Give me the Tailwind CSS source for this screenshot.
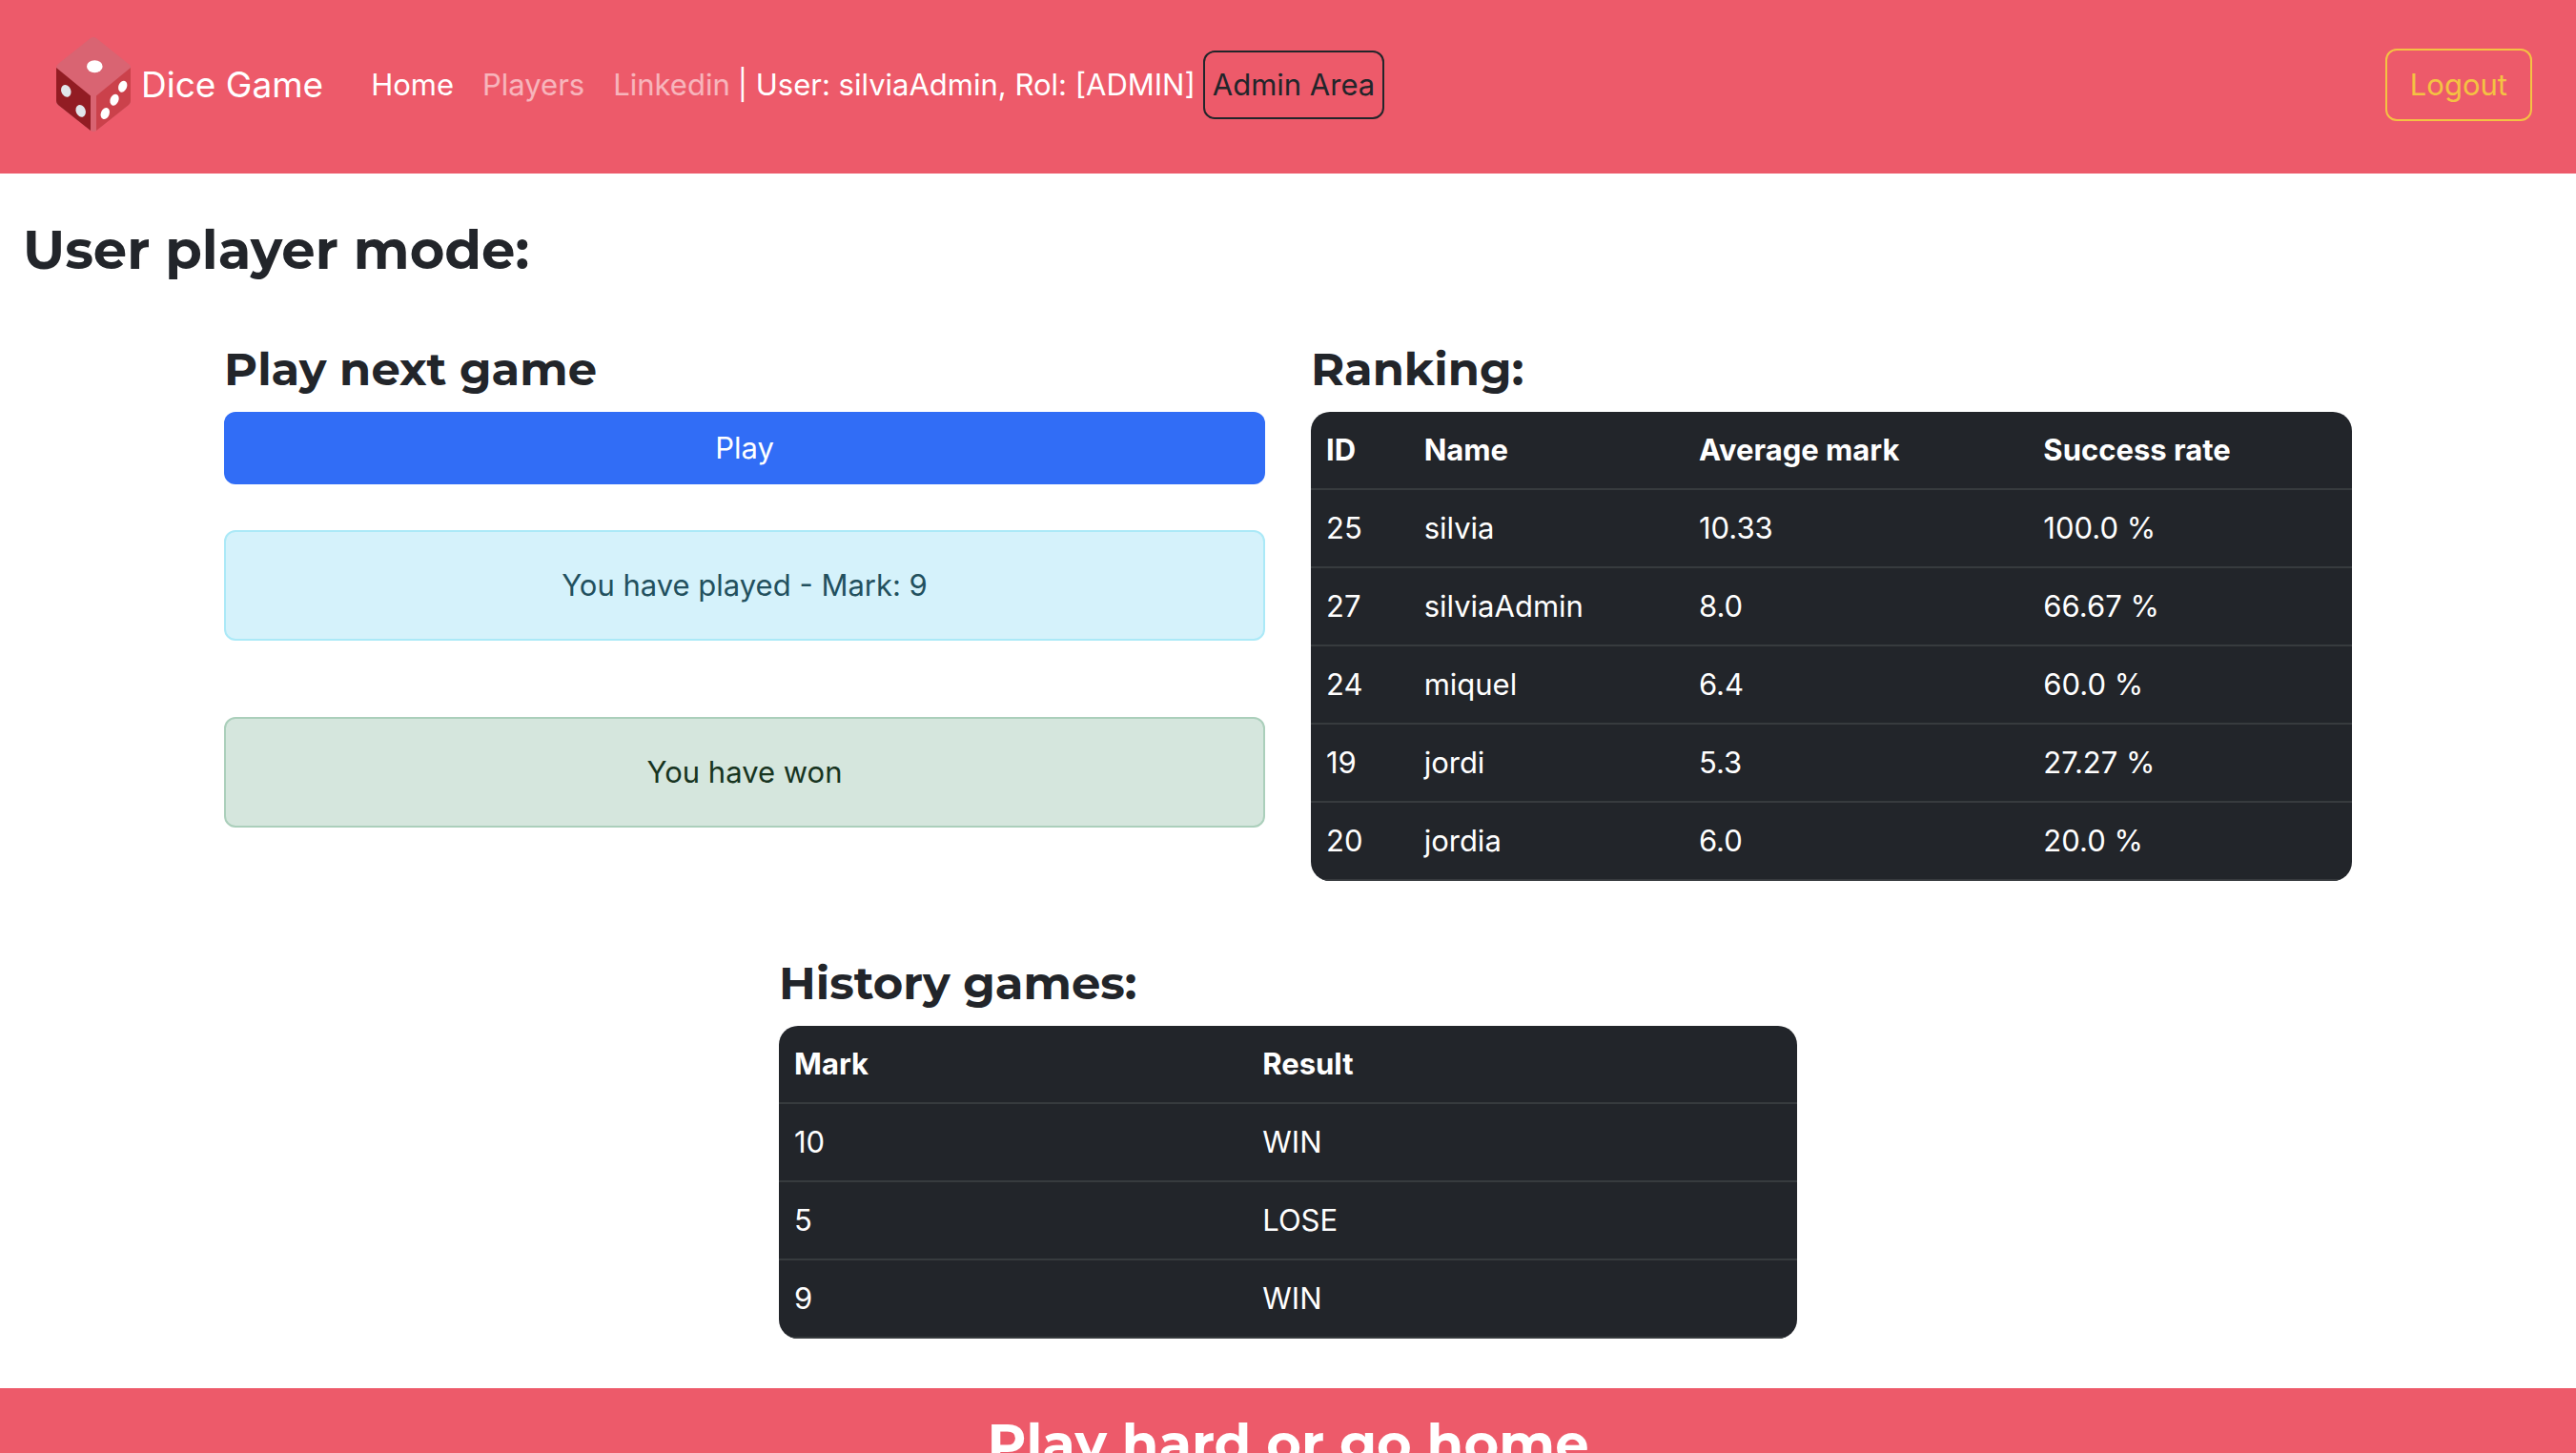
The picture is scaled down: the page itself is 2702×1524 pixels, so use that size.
<!DOCTYPE html>
<html lang="en">
<head>
<meta charset="utf-8">
<meta name="viewport" content="width=device-width, initial-scale=1">
<title>Dice Game</title>
<script src="https://cdn.jsdelivr.net/npm/@tailwindcss/browser@4"></script>
</head>
<body class="bg-white text-[#22252a] font-[Inter,sans-serif] text-[31px] leading-[48px]">

<header class="bg-[#ed5a6a] flex items-center px-12 pt-[39px] pb-[43px]">
  <a href="#" class="flex items-center text-white text-[37px] leading-[60px] whitespace-nowrap">
    <svg class="size-[100px] shrink-0" viewBox="0 0 100 100" aria-hidden="true">
      <path fill="#d96472" d="M47 1Q50-1 53 1L88 29Q89 30 89 32V67Q89 70 87 71L53 98Q50 100 47 98L11 70V32Q11 30 13 28Z"/>
      <path fill="#921c23" d="M11 32L47 61.500V98L13 71Q11 69 11 67Z"/>
      <path fill="#cb414b" d="M89 32L53 61.500V98L87 71Q89 69 89 67Z"/>
      <ellipse cx="51.300" cy="30.700" rx="8.300" ry="6.500" fill="#fff"/>
      <g fill="#e1e6eb">
        <ellipse cx="21.300" cy="56.300" rx="5" ry="6.600" transform="rotate(-22 21.300 56.300)"/>
        <ellipse cx="36.700" cy="77.300" rx="5" ry="6.600" transform="rotate(-22 36.700 77.300)"/>
      </g>
      <g fill="#fff">
        <ellipse cx="80.700" cy="51.700" rx="4.400" ry="6.200" transform="rotate(22 80.700 51.700)"/>
        <ellipse cx="72" cy="65.700" rx="4.400" ry="6.200" transform="rotate(22 72 65.700)"/>
        <ellipse cx="62.300" cy="80" rx="4.400" ry="6.200" transform="rotate(22 62.300 80)"/>
      </g>
    </svg>
    <span>Dice Game</span>
  </a>
  <nav class="ml-[50px] flex items-center gap-[30px] whitespace-nowrap">
    <a href="#" class="text-white">Home</a>
    <a href="#" class="text-white/55">Players</a>
    <a href="#" class="text-white/55">Linkedin</a>
  </nav>
  <span class="ml-2 text-white whitespace-nowrap">| User: silviaAdmin, Rol: [ADMIN]</span>
  <button type="button" class="ml-2 h-[72px] px-2 border-2 border-[#22252a] rounded-xl whitespace-nowrap">Admin Area</button>
  <button type="button" class="ml-auto -mr-0.5 h-[76px] px-6 border-2 border-[#f4c243] text-[#f4c243] rounded-xl">Logout</button>
</header>

<main>
  <h1 class="px-6 pt-[46px] font-[Montserrat,Inter,sans-serif] font-bold text-[56px] leading-[68px]">User player mode:</h1>

  <div class="max-w-[2280px] mx-auto px-6 mt-[62px] grid grid-cols-2 gap-12">
    <section>
      <h2 class="mb-4 font-[Montserrat,Inter,sans-serif] font-bold text-[48px] leading-[58px]">Play next game</h2>
      <button type="button" class="w-full h-[76px] bg-[#316df6] text-white rounded-xl">Play</button>
      <div role="status" class="mt-12 py-8 border-2 border-[#abe9f7] bg-[#d5f2fb] text-[#22505e] rounded-xl text-center">You have played - Mark: 9</div>
      <div role="status" class="mt-20 py-8 border-2 border-[#abcfbb] bg-[#d5e6dd] text-[#17341f] rounded-xl text-center">You have won</div>
    </section>

    <section>
      <h2 class="mb-4 font-[Montserrat,Inter,sans-serif] font-bold text-[48px] leading-[58px]" id="ranking">Ranking:</h2>
      <div class="rounded-[20px] overflow-hidden bg-[#22252a]">
        <table aria-labelledby="ranking" class="w-full table-fixed text-left text-white [&_th]:p-4 [&_td]:p-4 [&_tr]:border-b-2 [&_tr]:border-[#373b3e]">
          <colgroup><col class="w-[9.400%]"><col class="w-[26.400%]"><col class="w-[33.100%]"><col></colgroup>
          <thead><tr><th>ID</th><th>Name</th><th>Average mark</th><th>Success rate</th></tr></thead>
          <tbody>
            <tr><td>25</td><td>silvia</td><td>10.33</td><td>100.0 %</td></tr>
            <tr><td>27</td><td>silviaAdmin</td><td>8.0</td><td>66.67 %</td></tr>
            <tr><td>24</td><td>miquel</td><td>6.4</td><td>60.0 %</td></tr>
            <tr><td>19</td><td>jordi</td><td>5.3</td><td>27.27 %</td></tr>
            <tr><td>20</td><td>jordia</td><td>6.0</td><td>20.0 %</td></tr>
          </tbody>
        </table>
      </div>
    </section>
  </div>

  <section class="max-w-[1068px] mx-auto mt-[78px] mb-[52px]">
    <h2 class="mb-4 font-[Montserrat,Inter,sans-serif] font-bold text-[48px] leading-[58px]" id="history">History games:</h2>
    <div class="rounded-[20px] overflow-hidden bg-[#22252a]">
      <table aria-labelledby="history" class="w-full table-fixed text-left text-white [&_th]:p-4 [&_td]:p-4 [&_tr]:border-b-2 [&_tr]:border-[#373b3e]">
        <colgroup><col class="w-[46%]"><col></colgroup>
        <thead><tr><th>Mark</th><th>Result</th></tr></thead>
        <tbody>
          <tr><td>10</td><td>WIN</td></tr>
          <tr><td>5</td><td>LOSE</td></tr>
          <tr><td>9</td><td>WIN</td></tr>
        </tbody>
      </table>
    </div>
  </section>
</main>

<footer class="bg-[#ed5a6a] py-6 text-center text-white">
  <p class="font-[Montserrat,Inter,sans-serif] font-bold text-[56px] leading-[68px]">Play hard or go home</p>
</footer>

</body>
</html>
